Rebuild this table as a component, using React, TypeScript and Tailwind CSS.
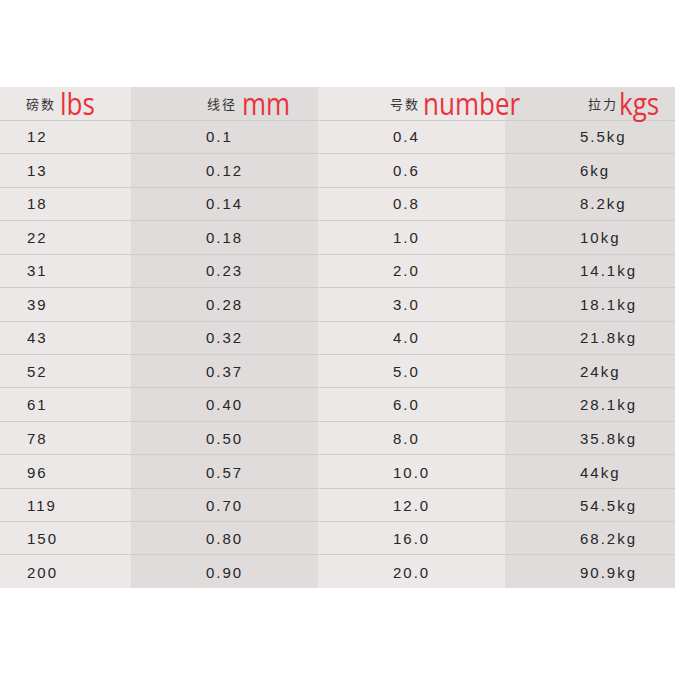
import React from 'react';

const rows: [string, string, string, string][] = [
  ['12', '0.1', '0.4', '5.5kg'],
  ['13', '0.12', '0.6', '6kg'],
  ['18', '0.14', '0.8', '8.2kg'],
  ['22', '0.18', '1.0', '10kg'],
  ['31', '0.23', '2.0', '14.1kg'],
  ['39', '0.28', '3.0', '18.1kg'],
  ['43', '0.32', '4.0', '21.8kg'],
  ['52', '0.37', '5.0', '24kg'],
  ['61', '0.40', '6.0', '28.1kg'],
  ['78', '0.50', '8.0', '35.8kg'],
  ['96', '0.57', '10.0', '44kg'],
  ['119', '0.70', '12.0', '54.5kg'],
  ['150', '0.80', '16.0', '68.2kg'],
  ['200', '0.90', '20.0', '90.9kg'],
];

// the source image's text drifts a little lower row by row
const rowShift = [
  'mt-0', 'mt-[1px]', 'mt-0', 'mt-[1px]', 'mt-[1px]', 'mt-[1px]', 'mt-[2px]',
  'mt-[3px]', 'mt-[2px]', 'mt-[3px]', 'mt-[3px]', 'mt-[3px]', 'mt-[2px]', 'mt-[4px]',
];

const headers = [
  { zh: '磅数', en: 'lbs', pad: 'pl-[26px]', gap: 'ml-[4px]' },
  { zh: '线径', en: 'mm', pad: 'pl-[76px]', gap: 'ml-[5px]' },
  { zh: '号数', en: 'number', pad: 'pl-[72px]', gap: 'ml-[3px]' },
  { zh: '拉力', en: 'kgs', pad: 'pl-[83px]', gap: 'ml-[1px]' },
];

const cellBg = ['bg-[#ebe8e7]', 'bg-[#dfdcdb]', 'bg-[#ebe8e7]', 'bg-[#dfdcdb]'];
const cellPad = ['pl-[27px]', 'pl-[75px]', 'pl-[75px]', 'pl-[75px]'];

const App = () => {
  return (
    <div className="w-[675px] h-[675px] bg-white pt-[87px] overflow-hidden">
      <div className="grid grid-cols-[131px_187px_187px_170px]">
        {headers.map((h, i) => (
          <div key={h.en} className={`${cellBg[i]} ${h.pad} h-[33px] flex items-center whitespace-nowrap`}>
            <span className="text-[13px] text-[#333] tracking-[2px] mt-[1px] font-['Noto_Sans_CJK_SC',sans-serif]">
              {h.zh}
            </span>
            <span className={`${h.gap} text-[31px] leading-none text-[#e8323d] font-['Open_Sans',sans-serif] scale-x-[0.84] origin-left inline-block`}>
              {h.en}
            </span>
          </div>
        ))}
      </div>
      {rows.map((r, ri) => (
        <div key={ri} className="grid grid-cols-[131px_187px_187px_170px] border-t border-[#cfcccb]">
          {r.map((v, ci) => (
            <div
              key={ci}
              className={`${cellBg[ci]} ${cellPad[ci]} h-[32.43px] flex items-center text-[15px] tracking-[2px] text-[#262626] font-['Liberation_Sans',Arial,sans-serif]`}
            >
              <span className={rowShift[ri]}>{v}</span>
            </div>
          ))}
        </div>
      ))}
    </div>
  );
};

export default App;
